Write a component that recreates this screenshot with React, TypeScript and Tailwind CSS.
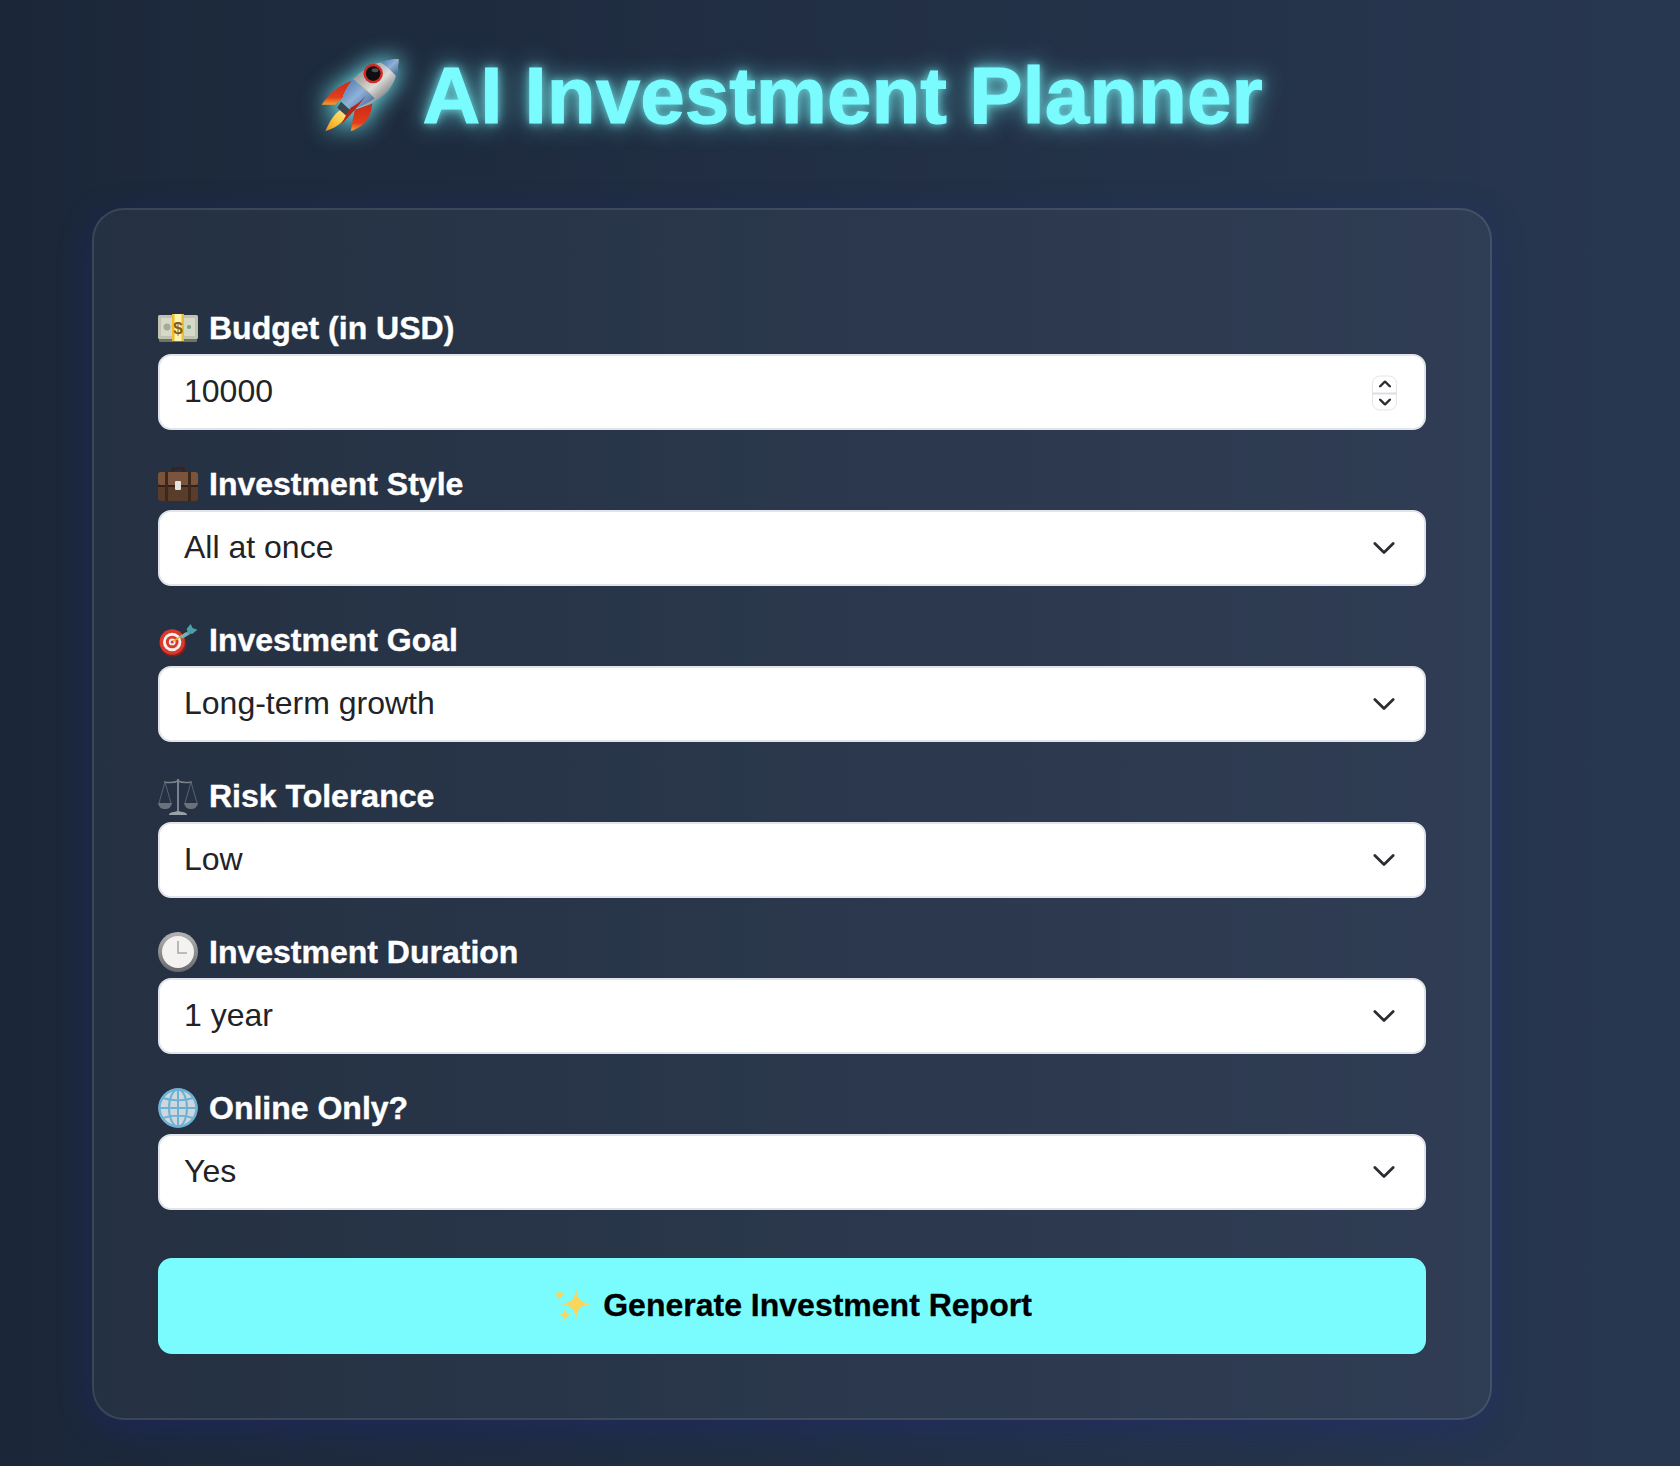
import React from 'react';

function Rocket() {
  return (
    <svg viewBox="0 0 80 76" className="w-[79px] h-[74px] shrink-0 drop-shadow-[0_0_12px_#7afcff]">
      <defs>
        <linearGradient id="rocketBody" x1="0" y1="0" x2="1" y2="1">
          <stop offset="0.2" stopColor="#7f8287" />
          <stop offset="0.55" stopColor="#dcdcda" />
          <stop offset="0.85" stopColor="#5c5e62" />
        </linearGradient>
        <linearGradient id="rocketBlue" x1="0" y1="0" x2="1" y2="1">
          <stop offset="0" stopColor="#426da8" />
          <stop offset="0.5" stopColor="#8fb1d8" />
          <stop offset="1" stopColor="#3a5989" />
        </linearGradient>
        <linearGradient id="rocketFin" x1="0" y1="0" x2="0" y2="1">
          <stop offset="0" stopColor="#c92a18" />
          <stop offset="0.7" stopColor="#e23d1c" />
          <stop offset="1" stopColor="#f5a02e" />
        </linearGradient>
        <linearGradient id="rocketFlame" x1="1" y1="0" x2="0" y2="1">
          <stop offset="0" stopColor="#fff0a0" />
          <stop offset="0.6" stopColor="#fbc33a" />
          <stop offset="1" stopColor="#f08a20" />
        </linearGradient>
      </defs>
      <path d="M34 21C22 25 9 33 0 47H14L24 38Z" fill="url(#rocketFin)" />
      <path d="M34 52L30 74C40 71 51 63 52 46Z" fill="url(#rocketFin)" />
      <path d="M23 50C14 54 8 64 4 74C12 72 22 66 28 56Z" fill="url(#rocketFlame)" />
      <path d="M79 0C65 1 48 5 33 20C27 27 22 36 21 43L30 52C40 50 57 45 68 33C76 24 79 10 79 0Z" fill="url(#rocketBody)" />
      <path d="M33 20C27 27 22 36 21 43L30 52C37 50 46 47 55 40Z" fill="url(#rocketBlue)" />
      <path d="M33 20L55 40" stroke="#d9c078" strokeWidth="0.8" />
      <path d="M79 0C73 0 67 1 60 3C66 7 72 12 77 18C78 12 79 6 79 0Z" fill="url(#rocketBlue)" />
      <path d="M20 44L30 53L25 58L16 50Z" fill="#3c4650" />
      <path d="M46 37C38 48 29 59 20 67C24 60 27 54 30 50C36 47 41 43 46 37Z" fill="#b82414" />
      <circle cx="53" cy="15" r="10" fill="#d42a22" />
      <circle cx="53" cy="15" r="7.5" fill="#0f0f12" />
      <ellipse cx="55" cy="11.5" rx="3.5" ry="2" fill="#4a4e56" />
    </svg>
  );
}

function Money() {
  return (
    <svg viewBox="0 0 40 28" className="w-10 h-7 shrink-0">
      <rect x="1" y="3" width="38" height="25" rx="1.5" fill="#6f7467" />
      <rect x="0" y="1" width="40" height="24" rx="1.5" fill="#bfc3b0" />
      <rect x="3" y="4" width="34" height="18" fill="#d6d9c8" />
      <circle cx="9" cy="13" r="3.5" fill="#a6ab98" />
      <circle cx="31" cy="13" r="2" fill="#6fa786" />
      <rect x="14" y="0" width="12" height="27" fill="#fdf3b0" />
      <rect x="14" y="0" width="2.5" height="27" fill="#f2bd2c" />
      <rect x="23.5" y="0" width="2.5" height="27" fill="#f2bd2c" />
      <text x="20" y="19.5" textAnchor="middle" fontSize="17" fontWeight="700" fill="#8a5a10" fontFamily="Liberation Sans">$</text>
    </svg>
  );
}

function Briefcase() {
  return (
    <svg viewBox="0 0 40 36" className="w-10 h-9 shrink-0">
      <path d="M13 7V3C13 1.5 14 1 15 1H25C26 1 27 1.5 27 3V7H24V4H16V7Z" fill="#3a2418" />
      <rect x="0" y="6" width="40" height="29" rx="3" fill="#5a3c2a" />
      <rect x="0" y="6" width="40" height="13" rx="3" fill="#7a543c" />
      <rect x="0" y="19" width="40" height="2" fill="#33211a" />
      <rect x="7" y="6" width="3" height="29" fill="#3e281b" />
      <rect x="30" y="6" width="3" height="29" fill="#3e281b" />
      <rect x="17" y="15" width="6" height="9" rx="1" fill="#e2e2de" />
    </svg>
  );
}

function Target() {
  return (
    <svg viewBox="0 0 40 34" className="w-10 h-[33px] shrink-0">
      <circle cx="15" cy="20" r="13.5" fill="#8f1c14" />
      <circle cx="14" cy="18.5" r="13" fill="#d83a2e" />
      <circle cx="14" cy="18.5" r="9.5" fill="#f4f0ec" />
      <circle cx="14" cy="18.5" r="6.5" fill="#d83a2e" />
      <circle cx="14" cy="18.5" r="3.5" fill="#f4f0ec" />
      <circle cx="14" cy="18.5" r="1.6" fill="#d83a2e" />
      <path d="M15 18L29 9" stroke="#d9b93b" strokeWidth="1.6" />
      <path d="M21 14L30 8L33 10L25 15Z" fill="#63b7bd" />
      <path d="M29 5L33 0L35 4L40 6L35 10L30 10Z" fill="#4d9fa8" />
    </svg>
  );
}

function Scales() {
  return (
    <svg viewBox="0 0 40 40" className="w-10 h-10 shrink-0" fill="none">
      <path d="M20 3V35" stroke="#7b828c" strokeWidth="2" />
      <path d="M6 6C12 7 16 7 20 5C24 7 28 7 34 6" stroke="#7b828c" strokeWidth="1.6" />
      <path d="M7 6L1 27M7 6L13 27M33 6L27 27M33 6L39 27" stroke="#5f6670" strokeWidth="0.9" />
      <path d="M0 27H14C13 32 10 33 7 33C4 33 1 32 0 27Z" fill="#69717c" />
      <path d="M26 27H40C39 32 36 33 33 33C30 33 27 32 26 27Z" fill="#69717c" />
      <path d="M11 39C11 36 16 36 20 35C24 36 29 36 29 39Z" fill="#99a0a9" />
    </svg>
  );
}

function Clock() {
  return (
    <svg viewBox="0 0 40 40" className="w-10 h-10 shrink-0">
      <defs>
        <linearGradient id="clockRim" x1="0" y1="0" x2="0" y2="1">
          <stop offset="0" stopColor="#b5b5b5" />
          <stop offset="1" stopColor="#66686c" />
        </linearGradient>
      </defs>
      <circle cx="20" cy="20" r="20" fill="url(#clockRim)" />
      <circle cx="20" cy="20" r="16" fill="#f4f2f0" />
      <path d="M20 9V21H29" fill="none" stroke="#a9a9a9" strokeWidth="1.6" />
    </svg>
  );
}

function Globe() {
  return (
    <svg viewBox="0 0 40 40" className="w-10 h-10 shrink-0" fill="none">
      <circle cx="20" cy="20" r="19.5" fill="#cfd6dc" />
      <g stroke="#6ab2d6" strokeWidth="2">
        <circle cx="20" cy="20" r="18.5" strokeWidth="2.5" />
        <ellipse cx="20" cy="20" rx="9" ry="18.5" />
        <path d="M20 1V39M2 20H38M5 10C14 13 26 13 35 10M5 30C14 27 26 27 35 30" />
      </g>
    </svg>
  );
}

function Sparkles() {
  const star = 'M0 -10C0.8 -2.5 2.5 -0.8 10 0C2.5 0.8 0.8 2.5 0 10C-0.8 2.5 -2.5 0.8 -10 0C-2.5 -0.8 -0.8 -2.5 0 -10Z';
  return (
    <svg viewBox="0 0 34 34" className="w-[34px] h-[34px] shrink-0">
      <path d={star} fill="#f9d65b" transform="translate(21 16) scale(1.65)" />
      <path d={star} fill="#f9d65b" transform="translate(4.5 7) scale(0.72)" />
      <path d={star} fill="#f9d65b" transform="translate(10 27) scale(0.72)" />
    </svg>
  );
}

function Chevron() {
  return (
    <svg viewBox="0 0 24 14" className="w-[22px] h-[13px]" fill="none">
      <path d="M2 2L12 12L22 2" stroke="#2b2d31" strokeWidth="3" strokeLinecap="round" strokeLinejoin="round" />
    </svg>
  );
}

function Spinner() {
  return (
    <div className="absolute right-[29px] top-1/2 -translate-y-1/2 mt-px w-[25px] h-[35px] flex flex-col rounded-lg border border-[#e4e5e8] bg-white pointer-events-none">
      <div className="flex-1 flex items-center justify-center border-b-2 border-[#dcdde0]">
        <svg viewBox="0 0 12 7" className="w-3 h-[7px]" fill="none">
          <path d="M1 6L6 1L11 6" stroke="#2b2d31" strokeWidth="2.4" strokeLinecap="round" />
        </svg>
      </div>
      <div className="flex-1 flex items-center justify-center">
        <svg viewBox="0 0 12 7" className="w-3 h-[7px]" fill="none">
          <path d="M1 1L6 6L11 1" stroke="#2b2d31" strokeWidth="2.4" strokeLinecap="round" />
        </svg>
      </div>
    </div>
  );
}

const fieldClass =
  'w-full h-[76px] pl-[24px] pr-[80px] pb-[2px] rounded-[13px] border-2 border-[#e1e4ea] bg-white text-[32px] text-[#212327] appearance-none outline-none';

function Field({ icon, label, children }: { icon: React.ReactNode; label: string; children: React.ReactNode }) {
  return (
    <div className="flex flex-col">
      <label className="h-[41px] pb-[11px] flex items-center gap-[11px] text-[32px] font-bold text-white leading-none [-webkit-text-stroke:0.4px_white]">
        <span className="w-10 h-10 flex items-center justify-center shrink-0">{icon}</span>
        {label}
      </label>
      {children}
    </div>
  );
}

function SelectField({ value, options }: { value: string; options: string[] }) {
  return (
    <div className="relative">
      <select defaultValue={value} className={fieldClass}>
        {options.map((o) => (
          <option key={o}>{o}</option>
        ))}
      </select>
      <div className="absolute right-[31px] top-1/2 -translate-y-1/2 pointer-events-none flex">
        <Chevron />
      </div>
    </div>
  );
}

const fields = [
  { icon: <Briefcase />, label: 'Investment Style', value: 'All at once', options: ['All at once', 'Monthly', 'Quarterly'] },
  { icon: <Target />, label: 'Investment Goal', value: 'Long-term growth', options: ['Long-term growth', 'Short-term gains', 'Passive income'] },
  { icon: <Scales />, label: 'Risk Tolerance', value: 'Low', options: ['Low', 'Medium', 'High'] },
  { icon: <Clock />, label: 'Investment Duration', value: '1 year', options: ['1 year', '5 years', '10 years'] },
  { icon: <Globe />, label: 'Online Only?', value: 'Yes', options: ['Yes', 'No'] },
];

export default function App() {
  return (
    <div className="w-[1680px] h-[1466px] overflow-hidden bg-[linear-gradient(to_right,#1b2739,#283750)] font-['Liberation_Sans',Arial,sans-serif]">
      <main className="ml-[92px] w-[1400px]">
        <h1 className="h-[208px] pb-[16px] flex items-center justify-center gap-[22px] text-[80px] font-bold text-[#7afcff] [-webkit-text-stroke:1px_#7afcff] [text-shadow:0_0_10px_#7afcffcc,0_0_24px_#7afcffcc]">
          <Rocket />
          AI Investment Planner
        </h1>
        <form className="h-[1212px] rounded-[32px] border-2 border-white/10 bg-white/[0.045] shadow-[0_8px_32px_0_rgba(31,38,135,0.37)] pt-[103px] px-[64px] flex flex-col">
          <div className="flex flex-col gap-[39px]">
            <Field icon={<Money />} label="Budget (in USD)">
              <div className="relative">
                <input type="text" defaultValue="10000" className={fieldClass} />
                <Spinner />
              </div>
            </Field>
            {fields.map((f) => (
              <Field key={f.label} icon={f.icon} label={f.label}>
                <SelectField value={f.value} options={f.options} />
              </Field>
            ))}
          </div>
          <button
            type="button"
            className="mt-[48px] h-[96px] pl-[3px] pb-[2px] rounded-[14px] bg-[#7afcff] flex items-center justify-center gap-[14px] text-[32px] font-bold text-black [-webkit-text-stroke:0.3px_black]"
          >
            <Sparkles />
            Generate Investment Report
          </button>
        </form>
      </main>
    </div>
  );
}
